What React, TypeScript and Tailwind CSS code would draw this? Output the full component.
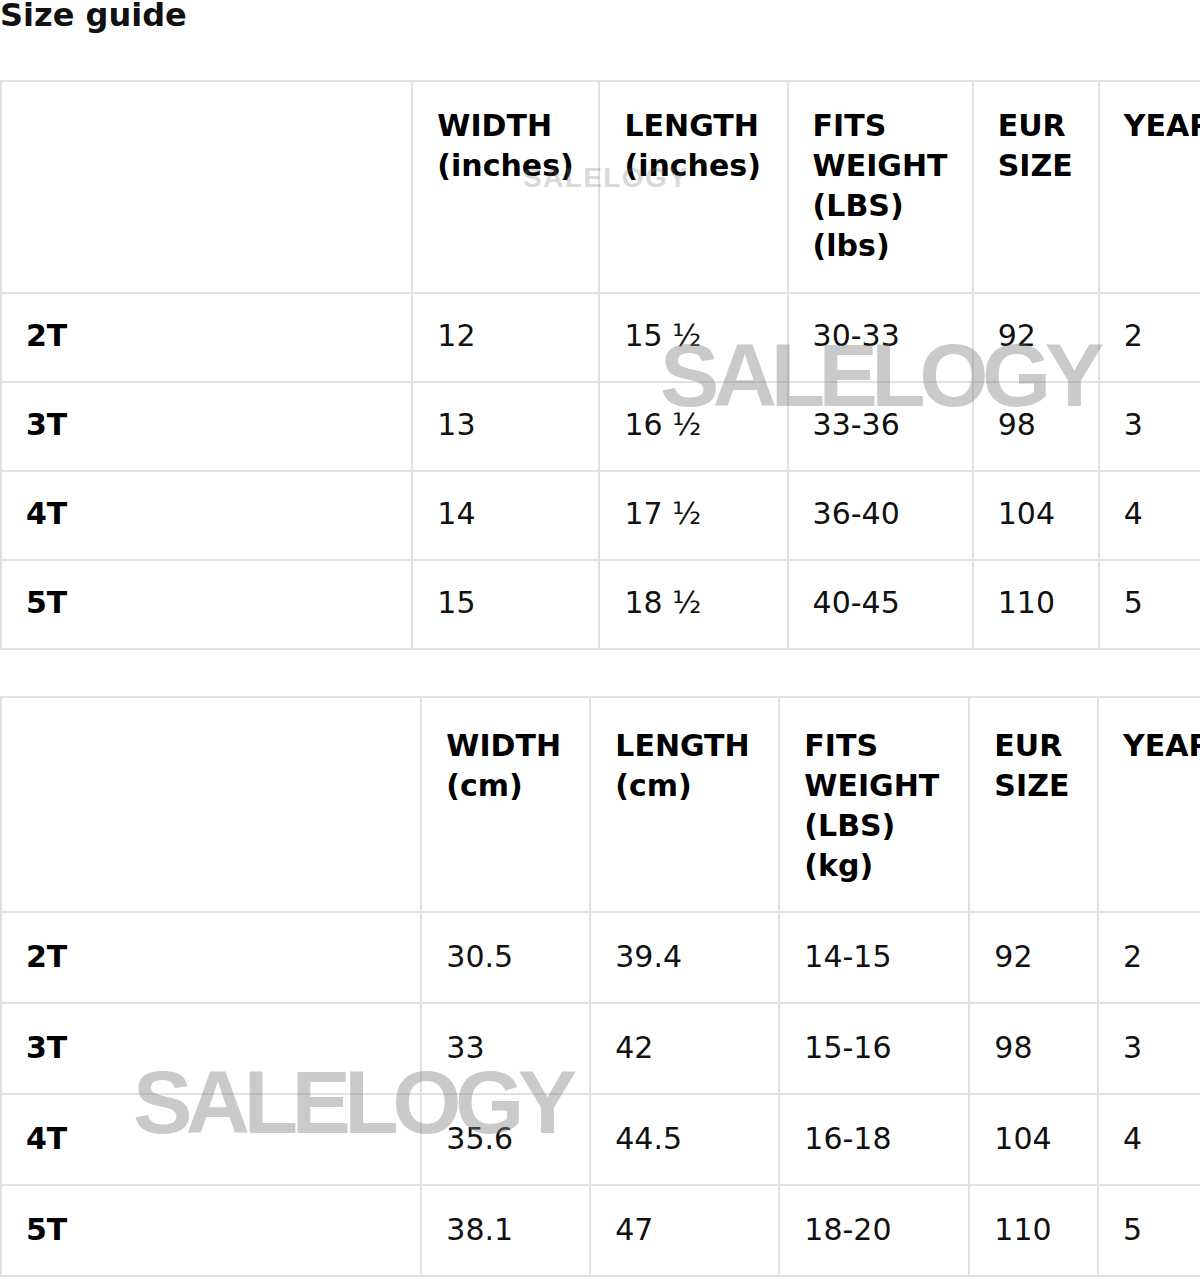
import React from 'react';

type Table = {
  cols: number[];
  headers: string[][];
  rows: string[][];
  headH: string;
  rowH: string;
  headPad: string;
};

const inches: Table = {
  cols: [411, 187, 188, 185, 126, 160],
  headers: [[], ['WIDTH', '(inches)'], ['LENGTH', '(inches)'], ['FITS', 'WEIGHT', '(LBS)', '(lbs)'], ['EUR', 'SIZE'], ['YEARS']],
  rows: [
    ['2T', '12', '15 ½', '30-33', '92', '2'],
    ['3T', '13', '16 ½', '33-36', '98', '3'],
    ['4T', '14', '17 ½', '36-40', '104', '4'],
    ['5T', '15', '18 ½', '40-45', '110', '5'],
  ],
  headH: 'h-[212px]',
  rowH: 'h-[89px] pb-[3px]',
  headPad: 'pt-6',
};

const cm: Table = {
  cols: [418, 168, 188, 189, 128, 160],
  headers: [[], ['WIDTH', '(cm)'], ['LENGTH', '(cm)'], ['FITS', 'WEIGHT', '(LBS)', '(kg)'], ['EUR', 'SIZE'], ['YEARS']],
  rows: [
    ['2T', '30.5', '39.4', '14-15', '92', '2'],
    ['3T', '33', '42', '15-16', '98', '3'],
    ['4T', '35.6', '44.5', '16-18', '104', '4'],
    ['5T', '38.1', '47', '18-20', '110', '5'],
  ],
  headH: 'h-[215px]',
  rowH: 'h-[91px] pb-[1px]',
  headPad: 'pt-[28px]',
};

function SizeTable({ t }: { t: Table }) {
  return (
    <table className="table-fixed border-collapse w-[1260px] text-[30px] leading-[40px] text-[#111]">
      <colgroup>
        {t.cols.map((w, i) => (
          <col key={i} style={{ width: w }} />
        ))}
      </colgroup>
      <thead>
        <tr>
          {t.headers.map((lines, i) => (
            <th
              key={i}
              className={`${t.headH} ${t.headPad} pl-6 pr-2 align-top text-left font-bold text-black border-2 border-[#e1e1e1]`}
            >
              {lines.map((l) => (
                <div key={l}>{l}</div>
              ))}
            </th>
          ))}
        </tr>
      </thead>
      <tbody>
        {t.rows.map((r) => (
          <tr key={r[0]}>
            {r.map((c, i) => (
              <td
                key={i}
                className={`${t.rowH} pt-0 pl-6 pr-2 align-middle border-2 border-[#e1e1e1] ${i === 0 ? 'font-bold text-black' : ''}`}
              >
                {c}
              </td>
            ))}
          </tr>
        ))}
      </tbody>
    </table>
  );
}

export default function App() {
  return (
    <div className="relative w-[1200px] h-[1279px] overflow-hidden bg-white font-['DejaVu_Sans',sans-serif]">
      <h1 className="text-[32px] leading-[34px] -mt-[2px] font-bold text-[#111]">Size guide</h1>
      <div className="mt-12">
        <SizeTable t={inches} />
      </div>
      <div className="mt-[46px]">
        <SizeTable t={cm} />
      </div>

      {/* watermarks */}
      <div className="absolute left-[523px] top-[164px] text-[28px] leading-none font-bold tracking-[0.05em] text-[rgba(120,120,120,0.3)] font-['Liberation_Sans',sans-serif] pointer-events-none">
        SALELOGY
      </div>
      <div className="absolute left-[660px] top-[331px] text-[89px] leading-none font-bold tracking-[-0.073em] text-[rgba(128,128,128,0.42)] font-['Liberation_Sans',sans-serif] pointer-events-none">
        SALELOGY
      </div>
      <div className="absolute left-[133px] top-[1058px] text-[89px] leading-none font-bold tracking-[-0.073em] text-[rgba(128,128,128,0.42)] font-['Liberation_Sans',sans-serif] pointer-events-none">
        SALELOGY
      </div>
    </div>
  );
}
